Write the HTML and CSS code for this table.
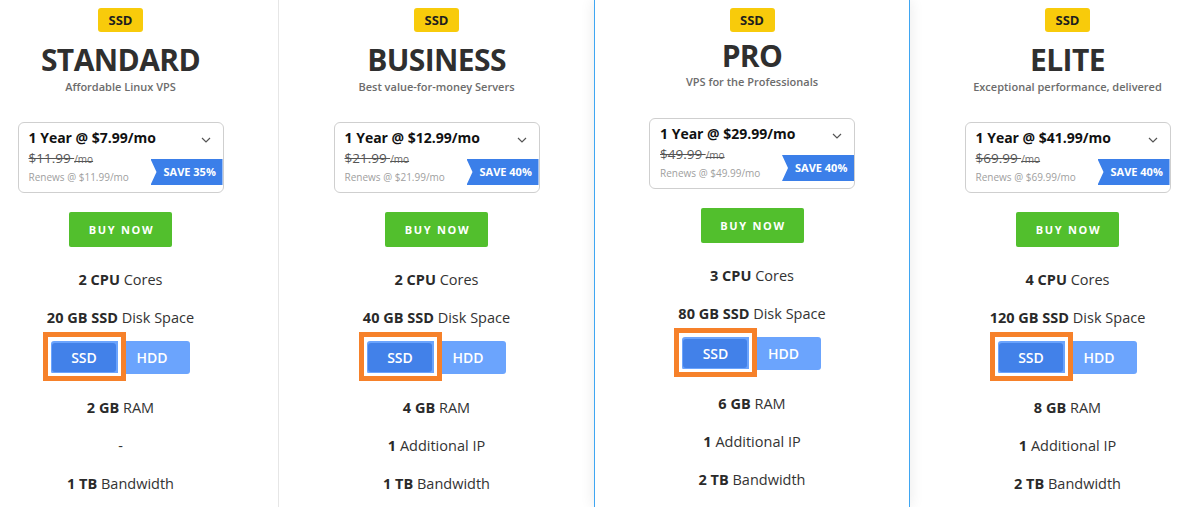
FILE: index.html
```html
<!DOCTYPE html>
<html lang="en">
<head>
<meta charset="utf-8">
<title>VPS Plans</title>
<link rel="stylesheet" href="styles.css">
</head>
<body>
<div class="plans">

  <section class="plan">
    <span class="badge">SSD</span>
    <h2 class="plan-name">STANDARD</h2>
    <p class="plan-tag">Affordable Linux VPS</p>
    <div class="price">
      <div class="price-main">1 Year @ $7.99/mo</div>
      <svg class="chev" width="10" height="6" viewBox="0 0 10 6"><polyline points="1,1 5,5 9,1" fill="none" stroke="#555" stroke-width="1.2"/></svg>
      <div class="price-old"><s>$11.99 <small>/mo</small></s></div>
      <div class="price-renew">Renews @ $11.99/mo</div>
      <span class="save">SAVE 35%</span>
    </div>
    <a class="buy" href="#">BUY NOW</a>
    <div class="specs">
      <p class="spec"><b>2 CPU</b> Cores</p>
      <div class="spec-disk">
        <p class="spec"><b>20 GB SSD</b> Disk Space</p>
        <div class="storage"><span class="opt opt-active">SSD</span><span class="opt">HDD</span><span class="mark"></span></div>
      </div>
      <p class="spec spec-after"><b>2 GB</b> RAM</p>
      <p class="spec">-</p>
      <p class="spec"><b>1 TB</b> Bandwidth</p>
    </div>
  </section>

  <section class="plan">
    <span class="badge">SSD</span>
    <h2 class="plan-name">BUSINESS</h2>
    <p class="plan-tag">Best value-for-money Servers</p>
    <div class="price">
      <div class="price-main">1 Year @ $12.99/mo</div>
      <svg class="chev" width="10" height="6" viewBox="0 0 10 6"><polyline points="1,1 5,5 9,1" fill="none" stroke="#555" stroke-width="1.2"/></svg>
      <div class="price-old"><s>$21.99 <small>/mo</small></s></div>
      <div class="price-renew">Renews @ $21.99/mo</div>
      <span class="save">SAVE 40%</span>
    </div>
    <a class="buy" href="#">BUY NOW</a>
    <div class="specs">
      <p class="spec"><b>2 CPU</b> Cores</p>
      <div class="spec-disk">
        <p class="spec"><b>40 GB SSD</b> Disk Space</p>
        <div class="storage"><span class="opt opt-active">SSD</span><span class="opt">HDD</span><span class="mark"></span></div>
      </div>
      <p class="spec spec-after"><b>4 GB</b> RAM</p>
      <p class="spec"><b>1</b> Additional IP</p>
      <p class="spec"><b>1 TB</b> Bandwidth</p>
    </div>
  </section>

  <section class="plan plan-featured">
    <span class="badge">SSD</span>
    <h2 class="plan-name">PRO</h2>
    <p class="plan-tag">VPS for the Professionals</p>
    <div class="price">
      <div class="price-main">1 Year @ $29.99/mo</div>
      <svg class="chev" width="10" height="6" viewBox="0 0 10 6"><polyline points="1,1 5,5 9,1" fill="none" stroke="#555" stroke-width="1.2"/></svg>
      <div class="price-old"><s>$49.99 <small>/mo</small></s></div>
      <div class="price-renew">Renews @ $49.99/mo</div>
      <span class="save">SAVE 40%</span>
    </div>
    <a class="buy" href="#">BUY NOW</a>
    <div class="specs">
      <p class="spec"><b>3 CPU</b> Cores</p>
      <div class="spec-disk">
        <p class="spec"><b>80 GB SSD</b> Disk Space</p>
        <div class="storage"><span class="opt opt-active">SSD</span><span class="opt">HDD</span><span class="mark"></span></div>
      </div>
      <p class="spec spec-after"><b>6 GB</b> RAM</p>
      <p class="spec"><b>1</b> Additional IP</p>
      <p class="spec"><b>2 TB</b> Bandwidth</p>
    </div>
  </section>

  <section class="plan">
    <span class="badge">SSD</span>
    <h2 class="plan-name">ELITE</h2>
    <p class="plan-tag">Exceptional performance, delivered</p>
    <div class="price">
      <div class="price-main">1 Year @ $41.99/mo</div>
      <svg class="chev" width="10" height="6" viewBox="0 0 10 6"><polyline points="1,1 5,5 9,1" fill="none" stroke="#555" stroke-width="1.2"/></svg>
      <div class="price-old"><s>$69.99 <small>/mo</small></s></div>
      <div class="price-renew">Renews @ $69.99/mo</div>
      <span class="save">SAVE 40%</span>
    </div>
    <a class="buy" href="#">BUY NOW</a>
    <div class="specs">
      <p class="spec"><b>4 CPU</b> Cores</p>
      <div class="spec-disk">
        <p class="spec"><b>120 GB SSD</b> Disk Space</p>
        <div class="storage"><span class="opt opt-active">SSD</span><span class="opt">HDD</span><span class="mark"></span></div>
      </div>
      <p class="spec spec-after"><b>8 GB</b> RAM</p>
      <p class="spec"><b>1</b> Additional IP</p>
      <p class="spec"><b>2 TB</b> Bandwidth</p>
    </div>
  </section>

</div>
</body>
</html>
```
FILE: styles.css
```css
* { box-sizing: border-box; }

html, body {
  margin: 0;
  padding: 0;
  background: #fff;
  overflow: hidden;
}

body {
  font-family: "Open Sans", "Noto Sans", "Liberation Sans", sans-serif;
  color: #333;
  height: 507px;
}

.plans {
  display: flex;
  width: 1264px;
  margin-left: -37px;
  height: 507px;
}

.plan {
  flex: none;
  width: 316px;
  height: 507px;
  border-right: 1px solid #e6e6e6;
  padding-top: 8px;
  text-align: center;
  display: flex;
  flex-direction: column;
  align-items: center;
}

.plan-featured {
  margin-left: -1px;
  border-left: 1px solid #3fa6f2;
  border-right: 1px solid #3fa6f2;
  box-shadow: 0 0 14px rgba(0, 0, 0, 0.09);
  position: relative;
  z-index: 1;
}

.badge {
  display: block;
  width: 45px;
  height: 24px;
  line-height: 24px;
  background: #f8cb0b;
  border-radius: 3px;
  font-size: 13px;
  font-weight: 700;
  color: #1e1e1e;
}

.plan-name {
  margin: 8px 0 0;
  font-size: 30px;
  line-height: 40px;
  font-weight: 700;
  letter-spacing: -0.6px;
  color: #2f2f2f;
}

.plan-featured .plan-name {
  margin-top: 4px;
  line-height: 39px;
}

.plan-tag {
  margin: -1px 0 0;
  font-size: 11px;
  line-height: 16px;
  font-weight: 600;
  color: #6c6c6c;
}

.price {
  position: relative;
  width: 206px;
  height: 71px;
  margin-top: 27px;
  border: 1px solid #cfcfcf;
  border-radius: 6px;
  padding: 6px 10px 0;
  text-align: left;
}

.plan-featured .price {
  margin-top: 28px;
}

.price-main {
  font-size: 14px;
  line-height: 18px;
  font-weight: 700;
  color: #111;
}

.chev {
  position: absolute;
  right: 12px;
  top: 14px;
}

.price-old {
  margin-top: 3px;
  font-size: 13.5px;
  line-height: 16px;
  color: #555;
}

.price-old s {
  text-decoration-thickness: 1px;
}

.price-old small {
  font-size: 10px;
  color: #666;
}

.price-renew {
  margin-top: 3px;
  font-size: 10px;
  line-height: 14px;
  color: #a0a0a0;
}

.save {
  position: absolute;
  right: 0;
  bottom: 7px;
  width: 72px;
  height: 26px;
  line-height: 26px;
  padding-left: 13px;
  background: #3b7fe9;
  color: #fff;
  font-size: 11px;
  font-weight: 700;
  clip-path: polygon(0 0, 100% 0, 100% 100%, 0 100%, 6px 50%);
}

.buy {
  display: block;
  width: 103px;
  height: 35px;
  line-height: 35px;
  margin-top: 19px;
  background: #52bf2d;
  border-radius: 2px;
  color: #fff;
  text-decoration: none;
  font-size: 11px;
  font-weight: 700;
  letter-spacing: 1.7px;
  padding-left: 2px;
}

.specs {
  margin-top: 23px;
  display: flex;
  flex-direction: column;
  align-items: center;
}

.spec {
  margin: 18px 0 0;
  font-size: 14.5px;
  line-height: 20px;
  color: #333;
}

.specs > .spec:first-child {
  margin-top: 0;
}

.spec b {
  font-weight: 700;
  color: #2a2a2a;
}

.spec-disk {
  margin-top: 18px;
  display: flex;
  flex-direction: column;
  align-items: center;
}

.spec-disk .spec {
  margin-top: 0;
}

.storage {
  position: relative;
  display: flex;
  width: 139px;
  height: 33px;
  margin-top: 13px;
  padding: 2px 2px 2px 1px;
  background: #6ba4fd;
  border-radius: 3px;
}

.opt {
  flex: 1;
  line-height: 29px;
  font-size: 14px;
  font-weight: 600;
  color: #fff;
}

.opt-active {
  flex: none;
  width: 64px;
  background: #4281e9;
  border-radius: 3px;
}

.mark {
  position: absolute;
  left: -8px;
  top: -9px;
  width: 83px;
  height: 49px;
  border: 5px solid #f6812a;
  box-shadow: inset 0 0 0 3px #fff;
}

.specs > .spec-after {
  margin-top: 24px;
}
```
